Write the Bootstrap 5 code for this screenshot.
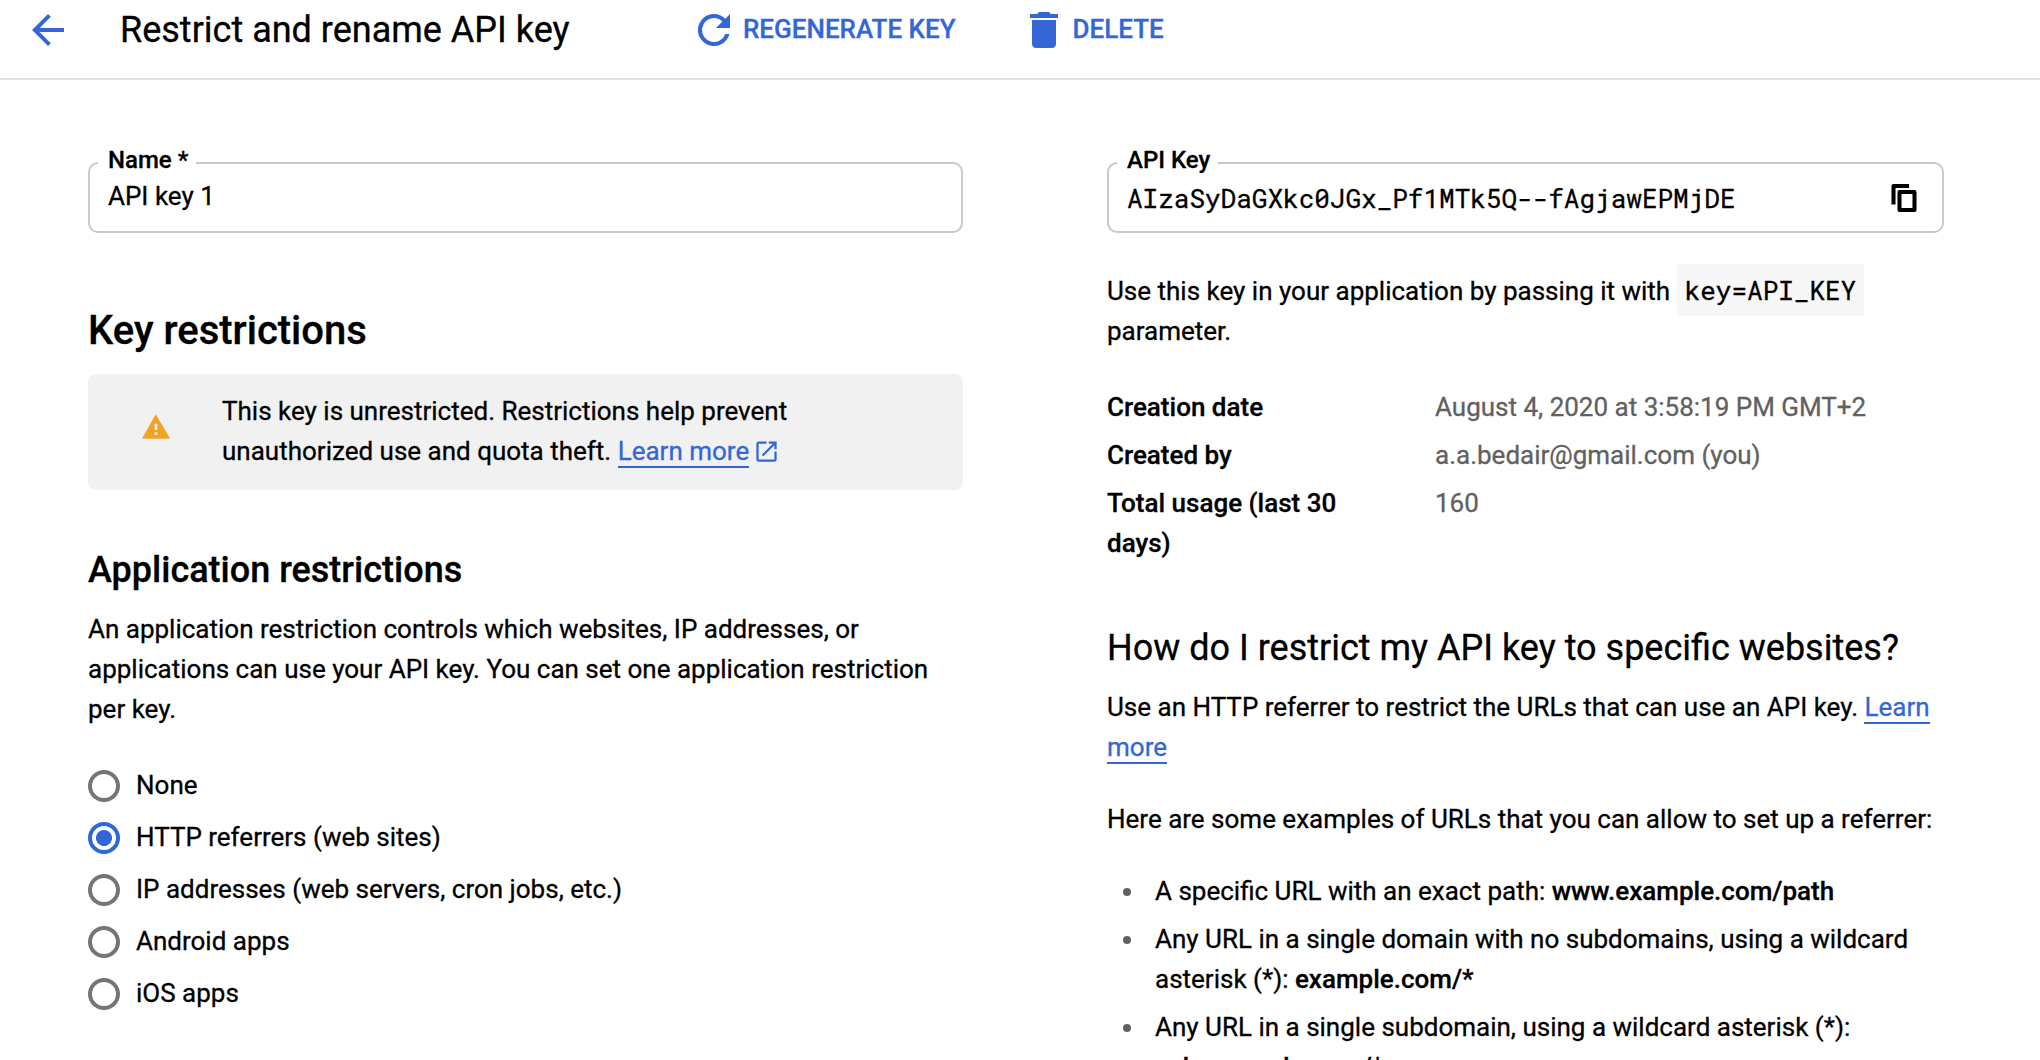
<!DOCTYPE html>
<html lang="en">
<head>
<meta charset="utf-8">
<meta name="viewport" content="width=device-width, initial-scale=1">
<title>Restrict and rename API key</title>
<link rel="stylesheet" href="https://cdn.jsdelivr.net/npm/bootstrap@5.3.0/dist/css/bootstrap.min.css">
<script src="https://cdn.jsdelivr.net/npm/bootstrap@5.3.0/dist/js/bootstrap.bundle.min.js"></script>
<style>
:root{--blue:#3367d6}
body{font-family:Roboto,sans-serif;font-size:26px;line-height:40px;color:#000;background:#fff;height:1060px;overflow:hidden;-webkit-text-stroke:.3px}
p,h1,h2,h3{margin:0}
svg{display:block;flex:none}
.topbar{height:80px;border-bottom:2px solid #e0e0e0;padding:0 24px 18px;color:var(--blue)}
.topbar h1{font-size:36px;line-height:60px;font-weight:400;color:#000;margin-left:48px;width:570px}
.tool-btn{font-size:26px;line-height:40px;font-weight:500;color:var(--blue);padding:0;border:0;border-radius:0;gap:6px}
.tool-btn + .tool-btn{margin-left:64px}
.tool-btn span{padding-bottom:2px;margin-left:-1px}
.page{padding:82px 96px 0 88px;gap:144px}
.col-form{width:875px}
.col-info{width:837px}
.field{position:relative;height:71px;border:2px solid #c9c9c9;border-radius:10px;padding:12px 18px}
.field label{position:absolute;left:8px;top:-20px;line-height:32px;padding:0 8px 0 10px;background:#fff;font-size:24px;font-weight:500}
.mono{font-family:"Roboto Mono","DejaVu Sans Mono",monospace}
.copy{margin-right:2px}
.h-key{font-size:40px;line-height:48px;font-weight:500;margin:74px 0 19px}
.warn{background:#f1f1f1;border-radius:8px;padding:17px 48px 19px 52px;gap:50px}
.warn-icon{margin-bottom:8px}
.h-app{font-size:36px;line-height:44px;font-weight:500;margin:58px 0 17px}
.lnk{color:var(--blue);text-decoration:none;border-bottom:2px solid var(--blue)}
.ext{display:inline-block;vertical-align:-5px;margin-left:-3px;color:var(--blue)}
.radios{margin-top:31px}
.radios .form-check{height:52px;padding:0;margin:0;gap:16px}
.radios .form-check-input{width:32px;height:32px;margin:0;float:none;border:4px solid #757575;background:none}
.radios .form-check-input:checked{border-color:var(--blue);background:radial-gradient(circle,var(--blue) 7.6px,transparent 8.4px)}
.radios label{padding-bottom:2px}
.key-use{margin-top:38px}
.key-code{font-size:26px;line-height:1;color:#000;background:#f7f7f7;padding:9px 8px}
.facts{margin:36px 0 0;gap:8px}
.facts dt{width:280px;margin-right:48px;font-weight:500}
.facts dd{margin:0;color:#616161}
.h-how{font-size:36px;line-height:44px;font-weight:400;margin:63px 0 17px}
.intro{margin-top:32px}
.samples{list-style:none;padding:0;margin:32px 0 0;gap:8px}
.samples li{gap:24px;padding-left:16px}
.samples li::before{content:"";flex:none;width:8px;height:8px;border-radius:50%;background:#616161;margin-top:17px}
.samples b{font-weight:500}
</style>
</head>
<body>
<header class="topbar d-flex align-items-center">
  <svg width="48" height="48" viewBox="0 0 24 24" fill="currentColor"><path d="M20 11H7.830l5.590-5.590L12 4l-8 8 8 8 1.410-1.410L7.830 13H20z"/></svg>
  <h1>Restrict and rename API key</h1>
  <button class="btn tool-btn d-flex align-items-center" type="button">
    <svg width="48" height="48" viewBox="0 0 24 24" fill="currentColor"><path d="M17.65 6.35A7.96 7.96 0 0 0 12 4a8 8 0 1 0 7.73 10h-2.08A6 6 0 1 1 12 6c1.66 0 3.14.69 4.22 1.78L13 11h7V4z"/></svg>
    <span>REGENERATE KEY</span>
  </button>
  <button class="btn tool-btn d-flex align-items-center" type="button">
    <svg width="48" height="48" viewBox="0 0 24 24" fill="currentColor"><path d="M6 19c0 1.1.9 2 2 2h8c1.1 0 2-.9 2-2V7H6zM19 4h-3.500l-1-1h-5l-1 1H5v2h14z"/></svg>
    <span>DELETE</span>
  </button>
</header>

<main class="page d-flex">
  <section class="col-form flex-shrink-0">
    <div class="field"><label>Name *</label><div>API key 1</div></div>

    <h2 class="h-key">Key restrictions</h2>
    <div class="warn d-flex align-items-center">
      <svg class="warn-icon" width="32" height="32" viewBox="0 0 24 24"><path fill="#f0a326" d="M12 2.700 22 19.600q.6 1.200-.6 1.200H2.600q-1.200 0-.6-1.200L11.300 3.300q.7-1 1.400 0z"/><path fill="#f1f1f1" d="M11 9.500h2v4.500h-2zM11 16h2v2h-2z"/></svg>
      <p>This key is unrestricted. Restrictions help prevent unauthorized use and quota theft. <a class="lnk" href="#">Learn more</a> <svg class="ext" width="27" height="27" viewBox="0 0 24 24" fill="currentColor"><path d="M19 19H5V5h7V3H5a2 2 0 0 0-2 2v14a2 2 0 0 0 2 2h14c1.100 0 2-.9 2-2v-7h-2zM14 3v2h3.590l-9.830 9.830 1.410 1.410L19 6.410V10h2V3z"/></svg></p>
    </div>

    <h3 class="h-app">Application restrictions</h3>
    <p>An application restriction controls which websites, IP addresses, or applications can use your API key. You can set one application restriction per key.</p>

    <div class="radios">
      <div class="form-check d-flex align-items-center"><input class="form-check-input" type="radio" name="r" id="r1"><label for="r1">None</label></div>
      <div class="form-check d-flex align-items-center"><input class="form-check-input" type="radio" name="r" id="r2" checked><label for="r2">HTTP referrers (web sites)</label></div>
      <div class="form-check d-flex align-items-center"><input class="form-check-input" type="radio" name="r" id="r3"><label for="r3">IP addresses (web servers, cron jobs, etc.)</label></div>
      <div class="form-check d-flex align-items-center"><input class="form-check-input" type="radio" name="r" id="r4"><label for="r4">Android apps</label></div>
      <div class="form-check d-flex align-items-center"><input class="form-check-input" type="radio" name="r" id="r5"><label for="r5">iOS apps</label></div>
    </div>
  </section>

  <section class="col-info flex-shrink-0">
    <div class="field d-flex align-items-center justify-content-between">
      <label>API Key</label>
      <span class="mono">AIzaSyDaGXkc0JGx_Pf1MTk5Q--fAgjawEPMjDE</span>
      <svg class="copy" width="36" height="36" viewBox="0 0 24 24" fill="#000"><path d="M15 3H5q-1 0-1 1v12h2V5h9zM19 7H9q-1 0-1 1v12q0 1 1 1h10q1 0 1-1V8q0-1-1-1zm-1 12h-8V9h8z" fill-rule="evenodd" stroke="#000" stroke-width=".7"/></svg>
    </div>
    <p class="key-use">Use this key in your application by passing it with <code class="mono key-code">key=API_KEY</code> parameter.</p>

    <dl class="facts d-flex flex-column">
      <div class="d-flex"><dt>Creation date</dt><dd>August 4, 2020 at 3:58:19 PM GMT+2</dd></div>
      <div class="d-flex"><dt>Created by</dt><dd>a.a.bedair@gmail.com (you)</dd></div>
      <div class="d-flex"><dt>Total usage (last 30 days)</dt><dd>160</dd></div>
    </dl>

    <h2 class="h-how">How do I restrict my API key to specific websites?</h2>
    <p>Use an HTTP referrer to restrict the URLs that can use an API key. <a class="lnk" href="#">Learn more</a></p>
    <p class="intro">Here are some examples of URLs that you can allow to set up a referrer:</p>
    <ul class="samples d-flex flex-column">
      <li class="d-flex"><div>A specific URL with an exact path: <b>www.example.com/path</b></div></li>
      <li class="d-flex"><div>Any URL in a single domain with no subdomains, using a wildcard asterisk (*): <b>example.com/*</b></div></li>
      <li class="d-flex"><div>Any URL in a single subdomain, using a wildcard asterisk (*): <b>sub.example.com/*</b></div></li>
    </ul>
  </section>
</main>
</body>
</html>
